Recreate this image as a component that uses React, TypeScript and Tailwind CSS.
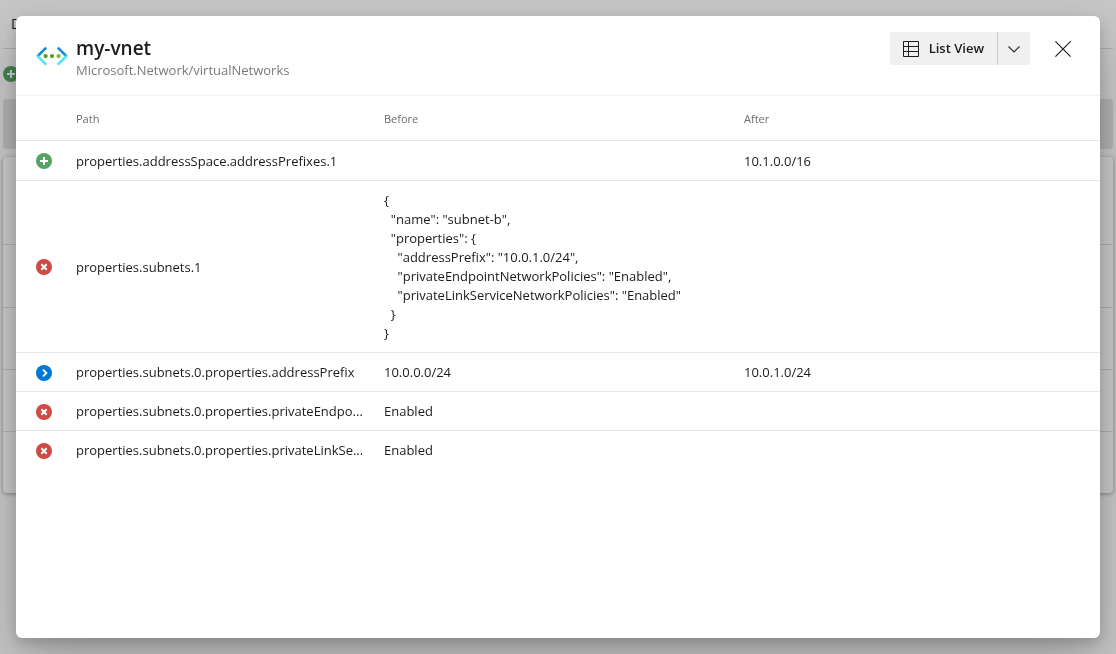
import type { ReactNode } from 'react';

type Kind = 'added' | 'removed' | 'changed';

interface Change {
  kind: Kind;
  path: string;
  before?: string;
  after?: string;
}

const removedSubnet = `{
  "name": "subnet-b",
  "properties": {
    "addressPrefix": "10.0.1.0/24",
    "privateEndpointNetworkPolicies": "Enabled",
    "privateLinkServiceNetworkPolicies": "Enabled"
  }
}`;

const changes: Change[] = [
  { kind: 'added', path: 'properties.addressSpace.addressPrefixes.1', after: '10.1.0.0/16' },
  { kind: 'removed', path: 'properties.subnets.1', before: removedSubnet },
  {
    kind: 'changed',
    path: 'properties.subnets.0.properties.addressPrefix',
    before: '10.0.0.0/24',
    after: '10.0.1.0/24',
  },
  { kind: 'removed', path: 'properties.subnets.0.properties.privateEndpo...', before: 'Enabled' },
  { kind: 'removed', path: 'properties.subnets.0.properties.privateLinkSe...', before: 'Enabled' },
];

const kindStyle: Record<Kind, { label: string; fill: string; mark: string; width: string }> = {
  added: { label: 'Added', fill: '#55a362', mark: 'M8 4v8M4 8h8', width: '2' },
  removed: { label: 'Removed', fill: '#cd4a45', mark: 'M5.3 5.3l5.4 5.4M10.7 5.3l-5.4 5.4', width: '2' },
  changed: { label: 'Changed', fill: '#0078d4', mark: 'M7 4.6l3.4 3.4L7 11.4', width: '1.9' },
};

function KindIcon({ kind }: { kind: Kind }) {
  const s = kindStyle[kind];
  return (
    <svg className="block size-4" viewBox="0 0 16 16" fill="none" role="img" aria-label={s.label}>
      <circle cx="8" cy="8" r="8" fill={s.fill} />
      <path d={s.mark} stroke="#fff" strokeWidth={s.width} />
    </svg>
  );
}

function NetworkIcon() {
  return (
    <svg className="size-8" viewBox="0 0 32 32" fill="none" aria-hidden="true">
      <path d="M10.2 7.6L1.3 16.5" stroke="#1a88df" strokeWidth="2.6" />
      <path d="M21.8 7.6l8.9 8.9" stroke="#1a88df" strokeWidth="2.6" />
      <path d="M1.2 15.6l9 9" stroke="#4fe4fb" strokeWidth="2.6" />
      <path d="M30.8 15.6l-9 9" stroke="#4fe4fb" strokeWidth="2.6" />
      <circle cx="9.6" cy="16.1" r="2.1" fill="#5e9c1e" />
      <circle cx="16" cy="16.1" r="2.1" fill="#5e9c1e" />
      <circle cx="22.6" cy="16.1" r="2.1" fill="#76bc2d" />
    </svg>
  );
}

function HeadCell({ children }: { children?: ReactNode }) {
  return (
    <th
      scope="col"
      className="h-[45px] border-b border-[#e8e8e8] p-0 text-left text-[11px] font-medium text-[#6b6b6b]"
    >
      {children}
    </th>
  );
}

function Cell({ children }: { children?: ReactNode }) {
  return (
    <td className="h-[39px] border-[#e8e8e8] pt-2.5 pb-[9px] align-middle in-[tr+tr]:border-t">
      {children}
    </td>
  );
}

function Backdrop() {
  return (
    <div className="min-h-screen bg-[#f8f8f8] px-[3px] will-change-transform" aria-hidden="true">
      <div className="flex h-[49px] items-center border-b border-[#d6d6d6] px-2 text-sm">D</div>
      <div className="flex h-[50px] items-center">
        <KindIcon kind="added" />
      </div>
      <div className="h-[50px] rounded bg-[#dedede]" />
      <div className="mt-2 rounded bg-[#fcfcfc] shadow-[0_1px_4px_rgba(0,0,0,0.35)]">
        <div className="h-[88px] border-b border-[#dcdcdc]" />
        <div className="h-[63px] border-b border-[#dcdcdc]" />
        <div className="h-[62px] border-b border-[#dcdcdc]" />
        <div className="h-[62px] border-b border-[#dcdcdc]" />
        <div className="h-[61px]" />
      </div>
    </div>
  );
}

export default function App() {
  return (
    <div className="font-['Open_Sans','Noto_Sans',sans-serif] text-[13px] leading-[19px] text-[#1b1b1b]">
      <Backdrop />
      <div className="fixed inset-0 flex bg-black/20 p-4">
        <section
          role="dialog"
          aria-modal="true"
          aria-labelledby="dialog-title"
          className="flex min-w-0 flex-1 flex-col overflow-hidden rounded-md bg-white shadow-[0_25px_58px_rgba(0,0,0,0.22),0_5px_14px_rgba(0,0,0,0.18)]"
        >
          <header className="flex h-20 shrink-0 items-start border-b border-[#f3f3f3] px-5 pt-4">
            <div className="flex flex-1 items-start gap-2 pt-1">
              <div className="pt-1">
                <NetworkIcon />
              </div>
              <div>
                <h1 id="dialog-title" className="text-[19px] leading-6 font-semibold">
                  my-vnet
                </h1>
                <p className="text-[13px] leading-5 text-[#7a7a7a]">Microsoft.Network/virtualNetworks</p>
              </div>
            </div>
            <div className="flex h-[33px] overflow-hidden rounded-xs bg-[#f0f0f0]">
              <button type="button" className="flex items-center gap-2.5 px-[13px] font-semibold">
                <svg className="size-4" viewBox="0 0 16 16" fill="none" stroke="#1b1b1b" aria-hidden="true">
                  <path d="M.5.5h15v15H.5zM.5 5.5h15M.5 10.5h15M5.5.5v15" />
                </svg>
                List View
              </button>
              <button
                type="button"
                aria-label="Choose view"
                className="flex w-[33px] items-center justify-center border-l border-[#c8c8c8]"
              >
                <svg className="h-2 w-3" viewBox="0 0 12 8" fill="none" stroke="#333" aria-hidden="true">
                  <path d="M.5 1.5L6 7l5.5-5.5" strokeWidth="1.2" />
                </svg>
              </button>
            </div>
            <button type="button" aria-label="Close" className="ml-4 flex size-[34px] items-center justify-center">
              <svg className="size-4" viewBox="0 0 16 16" fill="none" stroke="#222" aria-hidden="true">
                <path d="M.4.4l15.2 15.2M15.6.4L.4 15.6" strokeWidth="1.2" />
              </svg>
            </button>
          </header>
          <div className="min-h-0 flex-1 overflow-auto">
            <table className="w-full table-fixed border-separate border-spacing-0">
              <colgroup>
                <col className="w-[60px]" />
                <col className="w-[308px]" />
                <col className="w-[360px]" />
                <col />
              </colgroup>
              <thead>
                <tr>
                  <HeadCell />
                  <HeadCell>Path</HeadCell>
                  <HeadCell>Before</HeadCell>
                  <HeadCell>After</HeadCell>
                </tr>
              </thead>
              <tbody>
                {changes.map((c) => (
                  <tr key={c.path}>
                    <Cell>
                      <div className="pl-5">
                        <KindIcon kind={c.kind} />
                      </div>
                    </Cell>
                    <Cell>
                      <div className="whitespace-nowrap">{c.path}</div>
                    </Cell>
                    <Cell>
                      <div className="whitespace-pre">{c.before}</div>
                    </Cell>
                    <Cell>
                      <div className="whitespace-pre">{c.after}</div>
                    </Cell>
                  </tr>
                ))}
              </tbody>
            </table>
          </div>
        </section>
      </div>
    </div>
  );
}
